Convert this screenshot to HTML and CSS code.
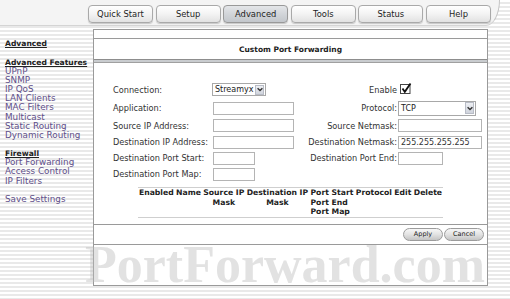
FILE: index.html
```html
<!DOCTYPE html>
<html>
<head>
<meta charset="utf-8">
<title>Custom Port Forwarding</title>
<link rel="stylesheet" href="styles.css">
</head>
<body>
<div class="page">
  <header class="topbar">
    <nav class="tabs">
      <a class="tab">Quick Start</a>
      <a class="tab">Setup</a>
      <a class="tab active">Advanced</a>
      <a class="tab">Tools</a>
      <a class="tab">Status</a>
      <a class="tab">Help</a>
    </nav>
  </header>
  <div class="layout">
    <aside class="sidebar">
      <a class="sb-head">Advanced</a>
      <span class="sb-gap"></span>
      <a class="sb-head">Advanced Features</a>
      <a class="sb-item">UPnP</a>
      <a class="sb-item">SNMP</a>
      <a class="sb-item">IP QoS</a>
      <a class="sb-item">LAN Clients</a>
      <a class="sb-item">MAC Filters</a>
      <a class="sb-item">Multicast</a>
      <a class="sb-item">Static Routing</a>
      <a class="sb-item">Dynamic Routing</a>
      <span class="sb-gap"></span>
      <a class="sb-head">Firewall</a>
      <a class="sb-item">Port Forwarding</a>
      <a class="sb-item">Access Control</a>
      <a class="sb-item">IP Filters</a>
      <span class="sb-gap"></span>
      <a class="sb-item">Save Settings</a>
    </aside>
    <main class="panel">
      <div class="p-top"></div>
      <div class="p-title">Custom Port Forwarding</div>
      <div class="p-bar"></div>
      <div class="form">
        <span class="lbl">Connection:</span>
        <span class="cell"><span class="select sel-conn"><span class="sel-val">Streamyx</span><span class="sel-arrow"><svg width="6" height="5" viewBox="0 0 6 5"><path d="M0.6 1.2 L3 3.6 L5.4 1.2" fill="none" stroke="#333" stroke-width="1.4"/></svg></span></span></span>
        <span class="lbl r">Enable</span>
        <span class="cell"><span class="check"><svg width="12" height="11" viewBox="0 0 12 11"><rect x="0.5" y="1.5" width="9.5" height="9" fill="#fff" stroke="#444"/><path d="M2.5 5.5 L4.8 8.8 L10.5 0.5" fill="none" stroke="#111" stroke-width="1.8"/></svg></span></span>

        <span class="lbl">Application:</span>
        <span class="cell"><input class="inp w80" type="text"></span>
        <span class="lbl r">Protocol:</span>
        <span class="cell"><span class="select sel-proto"><span class="sel-val">TCP</span><span class="sel-arrow"><svg width="6" height="5" viewBox="0 0 6 5"><path d="M0.6 1.2 L3 3.6 L5.4 1.2" fill="none" stroke="#333" stroke-width="1.4"/></svg></span></span></span>

        <span class="lbl">Source IP Address:</span>
        <span class="cell"><input class="inp w80" type="text"></span>
        <span class="lbl r">Source Netmask:</span>
        <span class="cell"><input class="inp w83" type="text"></span>

        <span class="lbl">Destination IP Address:</span>
        <span class="cell"><input class="inp w80" type="text"></span>
        <span class="lbl r">Destination Netmask:</span>
        <span class="cell"><input class="inp w83" type="text" value="255.255.255.255"></span>

        <span class="lbl">Destination Port Start:</span>
        <span class="cell"><input class="inp w41" type="text"></span>
        <span class="lbl r">Destination Port End:</span>
        <span class="cell"><input class="inp w44" type="text"></span>

        <span class="lbl">Destination Port Map:</span>
        <span class="cell"><input class="inp w41" type="text"></span>
      </div>
      <table class="rules">
        <thead>
          <tr>
            <th>Enabled</th>
            <th>Name</th>
            <th>Source IP<br>Mask</th>
            <th>Destination IP<br>Mask</th>
            <th class="left">Port Start<br>Port End<br>Port Map</th>
            <th>Protocol</th>
            <th>Edit</th>
            <th>Delete</th>
          </tr>
        </thead>
      </table>
      <div class="actions">
        <button class="btn" type="button">Apply</button>
        <button class="btn" type="button">Cancel</button>
      </div>
    </main>
  </div>
  <div class="watermark">PortForward.com</div>
</div>
</body>
</html>
```

FILE: styles.css
```css
* { box-sizing: border-box; }

html, body {
  margin: 0;
  padding: 0;
}

body {
  width: 510px;
  height: 299px;
  overflow: hidden;
  font-family: "DejaVu Sans", Verdana, sans-serif;
  color: #333;
  background: repeating-linear-gradient(to bottom, #ffffff 0, #ffffff 2px, #e9e9e9 2px, #e9e9e9 4px);
}

.page {
  position: relative;
  width: 510px;
  height: 299px;
}

/* top band with tabs */
.topbar {
  width: 500px;
  height: 26px;
  background: #f4f4f4;
  border-right: 1px solid #c4c4c4;
  border-bottom: 1px solid #d4d4d4;
  border-bottom-right-radius: 14px 26px;
}

.tabs {
  display: flex;
  gap: 2.6px;
  padding: 5px 0 0 88px;
}

.tab {
  width: 65px;
  height: 18px;
  border: 1px solid #a9a9a9;
  border-radius: 4px;
  background: linear-gradient(to bottom, #ffffff 0%, #f3f3f3 50%, #e2e2e2 100%);
  box-shadow: 0 1px 1px rgba(0, 0, 0, 0.18);
  font-size: 8.4px;
  color: #1e1e1e;
  display: flex;
  align-items: center;
  justify-content: center;
}

.tab.active {
  background: linear-gradient(to bottom, #e4e6e9 0%, #d2d5d9 50%, #c3c7cc 100%);
  border-color: #999;
}

/* layout */
.layout {
  display: grid;
  grid-template-columns: 93px 395px;
  margin-top: 3px;
}

.sidebar {
  display: flex;
  flex-direction: column;
  align-items: flex-start;
  padding: 10.4px 0 0 5px;
  line-height: 9.15px;
}

.sb-head {
  font-weight: bold;
  font-size: 7.6px;
  color: #222;
  text-decoration: underline;
  height: 9.15px;
}

.sb-item {
  font-size: 8.8px;
  color: #5f4f8a;
  height: 9.15px;
}

.sb-gap {
  height: 9.15px;
}

/* panel */
.panel {
  height: 257px;
  background: #fff;
  border: 1px solid #9a9a9a;
}

.p-top {
  height: 9px;
  border-bottom: 1px solid #9a9a9a;
}

.p-title {
  height: 20px;
  font-weight: bold;
  font-size: 7.5px;
  color: #222;
  display: flex;
  align-items: center;
  justify-content: center;
}

.p-bar {
  height: 4px;
  background: #c9cccf;
  border-top: 1px solid #8d8d8d;
  border-bottom: 1px solid #a0a0a0;
}

.form {
  display: grid;
  grid-template-columns: 99px 88px 97px 1fr;
  grid-template-rows: 19px 18px 17px 16px 16px 16px;
  align-items: center;
  padding: 17px 0 0 19px;
  font-size: 8.2px;
  color: #333;
}

.lbl {
  white-space: nowrap;
}

.lbl.r {
  text-align: right;
}

.cell {
  display: flex;
  align-items: center;
}

.inp {
  height: 13px;
  margin: 0 0 0 1px;
  padding: 0 2px;
  border: 1px solid #b4b4b4;
  background: #fff;
  font-family: "DejaVu Sans", Verdana, sans-serif;
  font-size: 8px;
  color: #333;
  outline: none;
}

.w80 { width: 81px; }
.w83 { width: 84px; }
.w41 { width: 42px; }
.w44 { width: 45px; }

.select {
  display: flex;
  align-items: center;
  background: #fff;
  border: 1px solid #a8a8a8;
  font-size: 8px;
  color: #222;
}

.sel-conn {
  width: 54px;
  height: 13px;
}

.sel-proto {
  width: 78px;
  height: 15px;
  margin-left: 1px;
}

.sel-val {
  flex: 1;
  padding-left: 2px;
  white-space: nowrap;
}

.sel-arrow {
  width: 9px;
  height: 10px;
  margin-right: 1px;
  border: 1px solid #b8bcc6;
  background: linear-gradient(to bottom, #eef0f4, #cfd3dc);
  display: flex;
  align-items: center;
  justify-content: center;
}

.sel-proto .sel-arrow {
  height: 12px;
}

.check {
  display: flex;
  margin-left: 3px;
  margin-top: -2px;
}

/* table */
.rules {
  margin: 5px auto 0;
  border-collapse: collapse;
  border-top: 1px solid #cfcfcf;
  border-bottom: 1px solid #cfcfcf;
}

.rules th {
  font-size: 7.7px;
  font-weight: bold;
  line-height: 9.6px;
  color: #222;
  padding: 0 1.2px;
  vertical-align: top;
  text-align: center;
  white-space: nowrap;
}

.rules th.left {
  text-align: left;
}

/* actions */
.actions {
  margin-top: 6px;
  height: 21px;
  border-top: 1px solid #9a9a9a;
  border-bottom: 1px solid #9a9a9a;
  display: flex;
  justify-content: flex-end;
  align-items: center;
  gap: 1px;
  padding-right: 3px;
}

.btn {
  width: 40px;
  height: 13px;
  padding: 0;
  border: 1px solid #9c9c9c;
  border-radius: 7px;
  background: linear-gradient(to bottom, #f7f7f7 0%, #e2e2e2 50%, #c4c4c4 100%);
  font-family: "DejaVu Sans", Verdana, sans-serif;
  font-size: 6.5px;
  color: #222;
}

/* watermark over the page */
.watermark {
  position: absolute;
  left: 85px;
  top: 238.5px;
  font-family: "Liberation Serif", "Times New Roman", serif;
  font-weight: bold;
  font-size: 52px;
  line-height: 52px;
  color: rgba(185, 185, 185, 0.42);
  white-space: nowrap;
  pointer-events: none;
}
```
